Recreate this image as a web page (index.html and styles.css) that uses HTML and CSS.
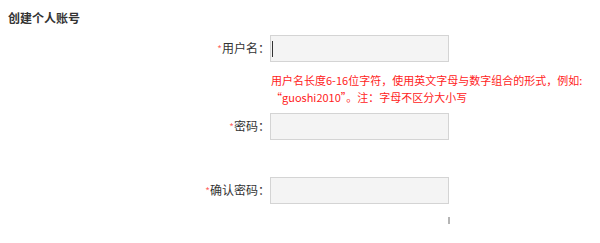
FILE: index.html
```html
<!DOCTYPE html>
<html lang="zh-CN">
<head>
<meta charset="utf-8">
<title>创建个人账号</title>
<link rel="stylesheet" href="styles.css">
</head>
<body>
<div class="page">
  <h2 class="title">创建个人账号</h2>
  <div class="form">
    <div class="row">
      <label class="label"><span class="star">*</span>用户名：</label>
      <div class="field"><span class="caret"></span></div>
    </div>
    <div class="hint"><span class="hint-line">用户名长度6-16位字符，使用英文字母与数字组合的形式，例如:</span><br><span class="hint-line">“guoshi2010”。注：字母不区分大小写</span></div>
    <div class="row row-pw">
      <label class="label"><span class="star">*</span>密码：</label>
      <div class="field"></div>
    </div>
    <div class="row row-confirm">
      <label class="label"><span class="star">*</span>确认密码：</label>
      <div class="field"></div>
    </div>
    <div class="mark"></div>
  </div>
</div>
</body>
</html>
```

FILE: styles.css
```css
html, body {
  margin: 0;
  padding: 0;
  background: #fff;
}
.page {
  padding: 10px 0 0 8px;
  font-family: "Noto Sans CJK SC", "Noto Sans", sans-serif;
  color: #333;
}
.title {
  margin: 0;
  font-size: 12px;
  line-height: 16px;
  font-weight: bold;
  color: #333;
}
.form {
  display: flex;
  flex-direction: column;
  margin-top: 9px;
}
.row {
  display: grid;
  grid-template-columns: 262px 179px;
  align-items: center;
}
.row-pw {
  margin-top: 7px;
}
.row-confirm {
  margin-top: 37px;
}
.label {
  text-align: right;
  font-size: 12px;
  line-height: 16px;
  color: #333;
}
.star {
  color: #f66;
  font-size: 10px;
}
.field {
  height: 25px;
  border: 1px solid #d4d4d4;
  background: #f4f4f4;
  display: flex;
  align-items: center;
  padding-left: 1px;
}
.caret {
  width: 1px;
  height: 16px;
  background: #333;
}
.hint {
  margin: 10px 0 0 263px;
  font-size: 11px;
  line-height: 17px;
  color: #f22;
  white-space: nowrap;
}
.mark {
  width: 2px;
  height: 7px;
  margin: 13px 0 0 440px;
  background: #b5b5b5;
}
```
